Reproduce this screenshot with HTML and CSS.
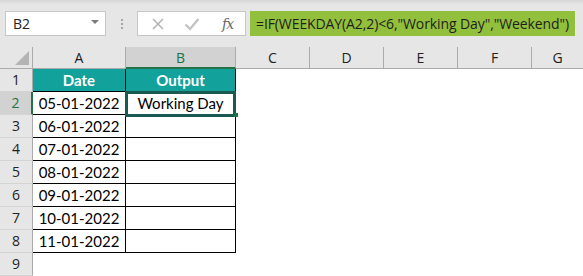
FILE: index.html
```html
<!DOCTYPE html>
<html lang="en">
<head>
    <meta charset="UTF-8">
    <title>Working Day - Sheet</title>
    <link rel="stylesheet" href="styles.css">
</head>
<body>
    <div class="toolbar">
        <div class="name-box">
            <span>B2</span>
            <span class="caret"></span>
        </div>
        <div class="grip"><i></i><i></i><i></i></div>
        <div class="fx-box">
            <svg class="ico" width="14" height="14" viewBox="0 0 14 14"><path d="M2 2 L12 12 M12 2 L2 12" stroke="#b3b3b3" stroke-width="1.6" fill="none"/></svg>
            <svg class="ico" width="16" height="14" viewBox="0 0 16 14"><path d="M1.5 7.5 L6 12 L14.5 2" stroke="#c4c4c4" stroke-width="2.4" fill="none"/></svg>
            <span class="fx">fx</span>
        </div>
        <div class="formula">=IF(WEEKDAY(A2,2)&lt;6,"Working Day","Weekend")</div>
    </div>

    <div class="sheet">
        <div class="corner"></div>
        <div class="col-head">A</div>
        <div class="col-head active">B</div>
        <div class="col-head">C</div>
        <div class="col-head">D</div>
        <div class="col-head">E</div>
        <div class="col-head">F</div>
        <div class="col-head last">G</div>

        <div class="row-head">1</div>
        <div class="cell head-cell">Date</div>
        <div class="cell head-cell">Output</div>
        <div class="cell blank"></div><div class="cell blank"></div><div class="cell blank"></div><div class="cell blank"></div><div class="cell blank"></div>

        <div class="row-head active">2</div>
        <div class="cell data">05-01-2022</div>
        <div class="cell data out sel">Working Day</div>
        <div class="cell blank"></div><div class="cell blank"></div><div class="cell blank"></div><div class="cell blank"></div><div class="cell blank"></div>

        <div class="row-head">3</div>
        <div class="cell data">06-01-2022</div>
        <div class="cell data out"></div>
        <div class="cell blank"></div><div class="cell blank"></div><div class="cell blank"></div><div class="cell blank"></div><div class="cell blank"></div>

        <div class="row-head">4</div>
        <div class="cell data">07-01-2022</div>
        <div class="cell data out"></div>
        <div class="cell blank"></div><div class="cell blank"></div><div class="cell blank"></div><div class="cell blank"></div><div class="cell blank"></div>

        <div class="row-head">5</div>
        <div class="cell data">08-01-2022</div>
        <div class="cell data out"></div>
        <div class="cell blank"></div><div class="cell blank"></div><div class="cell blank"></div><div class="cell blank"></div><div class="cell blank"></div>

        <div class="row-head">6</div>
        <div class="cell data">09-01-2022</div>
        <div class="cell data out"></div>
        <div class="cell blank"></div><div class="cell blank"></div><div class="cell blank"></div><div class="cell blank"></div><div class="cell blank"></div>

        <div class="row-head">7</div>
        <div class="cell data">10-01-2022</div>
        <div class="cell data out"></div>
        <div class="cell blank"></div><div class="cell blank"></div><div class="cell blank"></div><div class="cell blank"></div><div class="cell blank"></div>

        <div class="row-head">8</div>
        <div class="cell data">11-01-2022</div>
        <div class="cell data out"></div>
        <div class="cell blank"></div><div class="cell blank"></div><div class="cell blank"></div><div class="cell blank"></div><div class="cell blank"></div>

        <div class="row-head">9</div>
        <div class="cell blank"></div><div class="cell blank"></div><div class="cell blank"></div><div class="cell blank"></div><div class="cell blank"></div><div class="cell blank"></div><div class="cell blank"></div>
    </div>
</body>
</html>
```

FILE: styles.css
```css
/* Page reset */
body, html {
    margin: 0;
    padding: 0;
    width: 100%;
    height: 100%;
    overflow: hidden;
    background-color: #ffffff;
    font-family: 'Open Sans', 'Noto Sans', sans-serif;
    color: #222222;
}

/* Formula bar strip */
.toolbar {
    height: 47px;
    box-sizing: border-box;
    padding: 11px 8px 0 5px;
    background: linear-gradient(#d6d6d6 0, #e4e4e4 4px, #e6e6e6 5px);
    display: flex;
    align-items: flex-start;
}

.name-box {
    width: 101px;
    height: 25px;
    box-sizing: border-box;
    background-color: #ffffff;
    border: 1px solid #c6c6c6;
    display: flex;
    align-items: center;
    justify-content: space-between;
    padding: 0 6px 0 7px;
    font-size: 14px;
}

.name-box .caret {
    width: 0;
    height: 0;
    border-left: 4px solid transparent;
    border-right: 4px solid transparent;
    border-top: 4px solid #7a7a7a;
    margin-top: -3px;
}

.grip {
    width: 31px;
    display: flex;
    flex-direction: column;
    align-items: center;
    gap: 2px;
    padding-top: 8px;
}

.grip i {
    width: 2px;
    height: 2px;
    background-color: #a6a6a6;
}

.fx-box {
    width: 109px;
    height: 25px;
    box-sizing: border-box;
    background-color: #ffffff;
    border: 1px solid #c6c6c6;
    display: flex;
    align-items: center;
    padding: 0 0 0 13px;
}

.fx-box .ico {
    margin-right: 19px;
}

.fx-box .ico + .ico {
    margin-right: 22px;
}

.fx {
    font-family: 'DejaVu Serif', 'Liberation Serif', serif;
    font-style: italic;
    font-size: 14px;
    color: #666666;
    letter-spacing: -1px;
}

.formula {
    margin-left: 4px;
    width: 325px;
    height: 25px;
    box-sizing: border-box;
    background-color: #93c03c;
    padding: 0 0 0 6px;
    font-size: 14px;
    letter-spacing: -0.1px;
    line-height: 25px;
    color: #1e1e1e;
    white-space: nowrap;
    overflow: hidden;
}

/* Worksheet grid */
.sheet {
    display: grid;
    grid-template-columns: 33px 93px 110px 74px 74px 74px 74px 51px;
    grid-template-rows: 22px repeat(9, 23px);
}

.corner {
    background-color: #e6e6e6;
    border-right: 1px solid #ababab;
    border-bottom: 1px solid #ababab;
    position: relative;
}

.corner::after {
    content: "";
    position: absolute;
    right: 3px;
    bottom: 3px;
    border-left: 14px solid transparent;
    border-bottom: 14px solid #b4b4b4;
}

.col-head {
    background-color: #e6e6e6;
    border-right: 1px solid #ababab;
    border-bottom: 1px solid #ababab;
    text-align: center;
    font-size: 14px;
    line-height: 21px;
    color: #222222;
}

.col-head.last {
    border-right: none;
}

.col-head.active {
    background-color: #d2d2d2;
    border-bottom: 2px solid #217346;
    color: #217346;
}

.row-head {
    background-color: #e6e6e6;
    border-right: 1px solid #ababab;
    border-bottom: 1px solid #d4d4d4;
    text-align: center;
    font-size: 14px;
    line-height: 22px;
    color: #222222;
}

.row-head.active {
    background-color: #d2d2d2;
    border-right: 2px solid #217346;
    color: #217346;
}

.cell {
    box-sizing: border-box;
    font-family: 'Lato', 'Open Sans', sans-serif;
    font-size: 15px;
    line-height: 22px;
    text-align: center;
    color: #000000;
}

.head-cell {
    background-color: #12a19b;
    color: #ffffff;
    font-weight: bold;
    border-right: 1px solid #000000;
    border-bottom: 1px solid #000000;
}

.data {
    border-right: 1px solid #000000;
    border-bottom: 1px solid #000000;
}

/* Selected cell outline with fill handle */
.sel {
    position: relative;
    z-index: 2;
}

.sel::after {
    content: "";
    position: absolute;
    top: -1px;
    left: -1px;
    right: -1px;
    bottom: -3px;
    border: 3px solid #1b5a52;
}

.sel::before {
    content: "";
    position: absolute;
    right: -3px;
    bottom: -3px;
    width: 4px;
    height: 4px;
    background-color: #217346;
    z-index: 2;
}
```
